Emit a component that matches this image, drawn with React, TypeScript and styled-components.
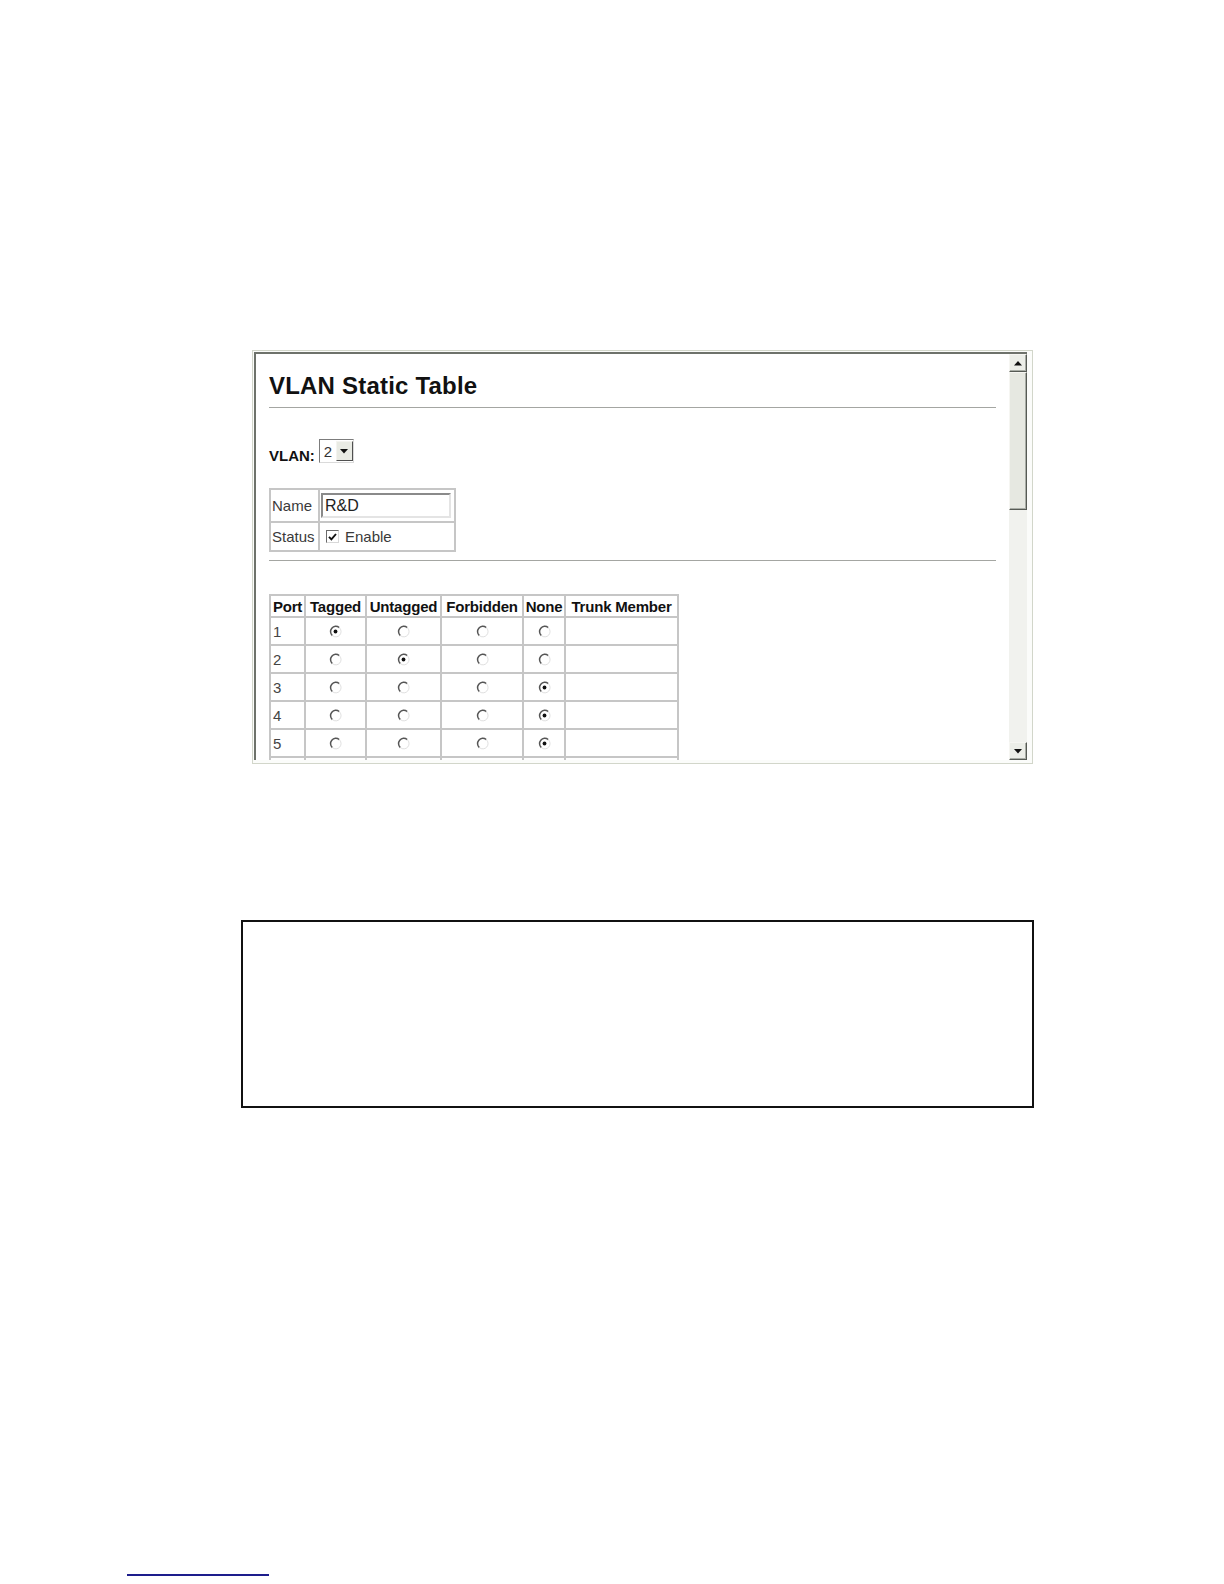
import React from 'react';
import styled, { createGlobalStyle } from 'styled-components';

type Choice = 'tagged' | 'untagged' | 'forbidden' | 'none';

interface PortRow {
  port: number;
  mode: Choice;
}

const ports: PortRow[] = [
  { port: 1, mode: 'tagged' },
  { port: 2, mode: 'untagged' },
  { port: 3, mode: 'none' },
  { port: 4, mode: 'none' },
  { port: 5, mode: 'none' },
];

const choices: Choice[] = ['tagged', 'untagged', 'forbidden', 'none'];

const GlobalStyle = createGlobalStyle`
  html, body {
    margin: 0;
    padding: 0;
    background: #fff;
  }
  body {
    font-family: "Liberation Sans", Arial, sans-serif;
  }
`;

const Page = styled.div`
  width: 1224px;
  height: 1584px;
  box-sizing: border-box;
  padding-top: 350px;
  display: flex;
  flex-direction: column;
  align-items: flex-start;
  overflow: hidden;
`;

// browser window screenshot
const Frame = styled.div`
  margin-left: 252px;
  width: 781px;
  height: 414px;
  box-sizing: border-box;
  border: 1px solid #d2d6ca;
  padding: 1px 5px 3px 1px;
  background: #fbfcfa;
`;

const Viewport = styled.div`
  height: 100%;
  box-sizing: border-box;
  border-top: 2px solid #6e726b;
  border-left: 2px solid #6e726b;
  display: flex;
  background: #fff;
`;

const Content = styled.div`
  flex: 1;
  overflow: hidden;
  padding: 19px 13px 0 13px;
  color: #111;
`;

const Title = styled.h1`
  margin: 0;
  font-size: 24px;
  line-height: 26px;
  font-weight: bold;
  letter-spacing: 0.2px;
  color: #111;
`;

const Rule = styled.div<{ $gap: number }>`
  margin-top: ${(p) => p.$gap}px;
  height: 1px;
  background: #a4a6a2;
`;

const VlanRow = styled.div`
  margin-top: 31px;
  display: flex;
  align-items: flex-start;
  gap: 4px;
  height: 24px;
`;

const VlanLabel = styled.span`
  padding-top: 8px;
  font-size: 15px;
  line-height: 17px;
  font-weight: bold;
  color: #111;
`;

const SelectBox = styled.div`
  width: 35px;
  height: 24px;
  box-sizing: border-box;
  border: 1px solid;
  border-color: #7c7c7c #dadada #dadada #7c7c7c;
  display: flex;
  align-items: center;
  justify-content: space-between;
  background: #fff;
`;

const SelectValue = styled.span`
  padding-left: 4px;
  font-size: 15px;
  color: #333;
`;

const SelectButton = styled.span`
  width: 17px;
  height: 20px;
  box-sizing: border-box;
  border: 1px solid;
  border-color: #f4f4f0 #505050 #505050 #f4f4f0;
  background: #e9ebe4;
  display: flex;
  align-items: center;
  justify-content: center;
`;

const InfoTable = styled.table`
  margin-top: 25px;
  border-collapse: separate;
  border-spacing: 0;
  border-top: 2px solid #c6c6c6;
  border-left: 2px solid #c6c6c6;
  table-layout: fixed;
  width: 187px;

  td {
    box-sizing: border-box;
    border-right: 2px solid #c6c6c6;
    border-bottom: 2px solid #c6c6c6;
    padding: 0;
    font-size: 15px;
    color: #3a3a3a;
    vertical-align: middle;
  }
`;

const LabelCell = styled.td`
  width: 49px;
  padding-left: 1px !important;
`;

const TextInput = styled.div`
  margin-left: 1px;
  width: 130px;
  height: 25px;
  box-sizing: border-box;
  border: 2px solid;
  border-color: #8a8a8a #e4e4e4 #e4e4e4 #8a8a8a;
  padding-left: 2px;
  font-size: 16px;
  line-height: 21px;
  color: #222;
`;

const CheckRow = styled.div`
  display: flex;
  align-items: center;
  gap: 6px;
  padding-left: 6px;
`;

const CheckBox = styled.span`
  width: 13px;
  height: 13px;
  box-sizing: border-box;
  border: 1px solid;
  border-color: #6a6a6a #d8d8d8 #d8d8d8 #6a6a6a;
  display: flex;
  align-items: center;
  justify-content: center;
`;

const PortTable = styled.table`
  margin-top: 33px;
  border-collapse: separate;
  border-spacing: 0;
  border-top: 2px solid #c6c6c6;
  border-left: 2px solid #c6c6c6;
  table-layout: fixed;
  width: 410px;

  th, td {
    box-sizing: border-box;
    border-right: 2px solid #c6c6c6;
    border-bottom: 2px solid #c6c6c6;
    padding: 0;
  }

  th {
    height: 22px;
    font-size: 15px;
    font-weight: bold;
    color: #111;
    text-align: center;
    white-space: nowrap;
    letter-spacing: -0.2px;
  }

  td {
    height: 28px;
    text-align: center;
    vertical-align: middle;
  }
`;

const HeadCell = styled.th<{ $w: number }>`
  width: ${(p) => p.$w}px;
`;

const PortCell = styled.td`
  text-align: left !important;
  padding-left: 2px !important;
  font-size: 15px;
  color: #444;
`;

const RadioWrap = styled.span`
  display: inline-flex;
  vertical-align: middle;
`;

// scrollbar
const ScrollBar = styled.div`
  width: 18px;
  display: flex;
  flex-direction: column;
  background: #f1f2ee;
`;

const ScrollButton = styled.div`
  height: 18px;
  box-sizing: border-box;
  border: 1px solid;
  border-color: #f6f6f2 #565a54 #565a54 #f6f6f2;
  box-shadow: inset -1px -1px 0 #a9ada6;
  background: #eceee8;
  display: flex;
  align-items: center;
  justify-content: center;
`;

const Thumb = styled.div`
  height: 138px;
  box-sizing: border-box;
  border: 1px solid;
  border-color: #f6f6f2 #565a54 #565a54 #f6f6f2;
  box-shadow: inset -1px -1px 0 #a9ada6;
  background: #e6e8e1;
`;

const Track = styled.div`
  flex: 1;
`;

const NoteBox = styled.div`
  margin-left: 241px;
  margin-top: 156px;
  width: 793px;
  height: 188px;
  box-sizing: border-box;
  border: 2px solid #111;
`;

const FooterRule = styled.div`
  margin-left: 127px;
  margin-top: 466px;
  width: 142px;
  height: 2px;
  background: #1d1d8c;
`;

const Radio: React.FC<{ checked: boolean }> = ({ checked }) => (
  <RadioWrap>
    <svg width="13" height="13" viewBox="0 0 13 13">
      <path d="M3.4 10.6 A5 5 0 0 1 10.2 2.6" fill="none" stroke="#555" strokeWidth="1.5" />
      <path d="M10.2 2.6 A5 5 0 0 1 3.4 10.6" fill="none" stroke="#e0e0e0" strokeWidth="1" />
      {checked && <circle cx="6.5" cy="6.5" r="1.9" fill="#111" />}
    </svg>
  </RadioWrap>
);

const Arrow: React.FC<{ down?: boolean }> = ({ down }) => (
  <svg width="8" height="5" viewBox="0 0 8 5">
    <path d={down ? 'M0 0 H8 L4 4.5 Z' : 'M0 4.5 H8 L4 0 Z'} fill="#111" />
  </svg>
);

const App: React.FC = () => {
  return (
    <Page>
      <GlobalStyle />

      <Frame>
        <Viewport>
          <Content>
            <Title>VLAN Static Table</Title>
            <Rule $gap={8} />

            <VlanRow>
              <VlanLabel>VLAN:</VlanLabel>
              <SelectBox>
                <SelectValue>2</SelectValue>
                <SelectButton>
                  <Arrow down />
                </SelectButton>
              </SelectBox>
            </VlanRow>

            <InfoTable>
              <tbody>
                <tr style={{ height: 33 }}>
                  <LabelCell>Name</LabelCell>
                  <td>
                    <TextInput>R&amp;D</TextInput>
                  </td>
                </tr>
                <tr style={{ height: 29 }}>
                  <LabelCell>Status</LabelCell>
                  <td>
                    <CheckRow>
                      <CheckBox>
                        <svg width="9" height="8" viewBox="0 0 9 8">
                          <path d="M1 3.8 L3.4 6.4 L8 1" fill="none" stroke="#111" strokeWidth="1.9" />
                        </svg>
                      </CheckBox>
                      <span>Enable</span>
                    </CheckRow>
                  </td>
                </tr>
              </tbody>
            </InfoTable>

            <Rule $gap={8} />

            <PortTable>
              <thead>
                <tr>
                  <HeadCell $w={35}>Port</HeadCell>
                  <HeadCell $w={61}>Tagged</HeadCell>
                  <HeadCell $w={75}>Untagged</HeadCell>
                  <HeadCell $w={82}>Forbidden</HeadCell>
                  <HeadCell $w={42}>None</HeadCell>
                  <HeadCell $w={113}>Trunk Member</HeadCell>
                </tr>
              </thead>
              <tbody>
                {ports.map((row) => (
                  <tr key={row.port}>
                    <PortCell>{row.port}</PortCell>
                    {choices.map((c) => (
                      <td key={c}>
                        <Radio checked={row.mode === c} />
                      </td>
                    ))}
                    <td />
                  </tr>
                ))}
                {/* next row, cut off by the window edge */}
                <tr>
                  <td />
                  <td />
                  <td />
                  <td />
                  <td />
                  <td />
                </tr>
              </tbody>
            </PortTable>
          </Content>

          <ScrollBar>
            <ScrollButton>
              <Arrow />
            </ScrollButton>
            <Thumb />
            <Track />
            <ScrollButton>
              <Arrow down />
            </ScrollButton>
          </ScrollBar>
        </Viewport>
      </Frame>

      <NoteBox />

      <FooterRule />
    </Page>
  );
};

export default App;
